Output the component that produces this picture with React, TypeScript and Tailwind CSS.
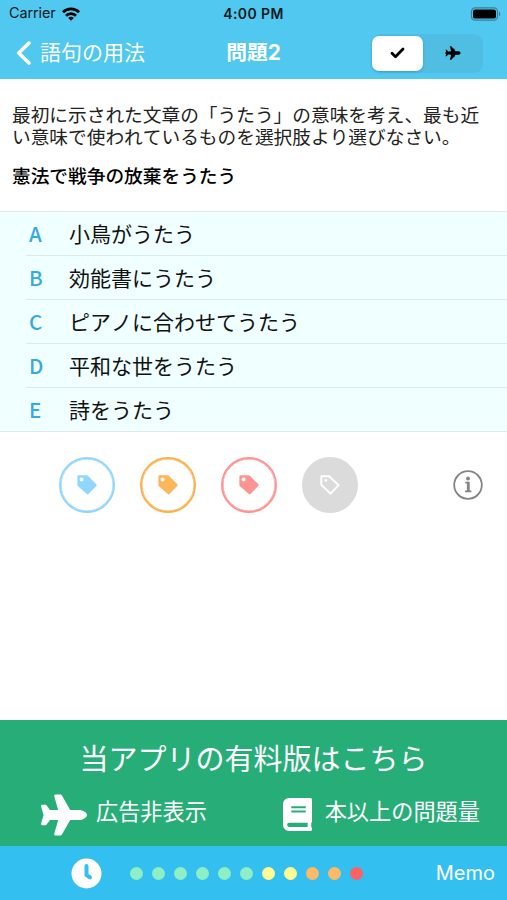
import type { ReactNode } from 'react'
import { FaBook, FaPlane } from 'react-icons/fa'

const choices = [
  { key: 'A', text: '小鳥がうたう' },
  { key: 'B', text: '効能書にうたう' },
  { key: 'C', text: 'ピアノに合わせてうたう' },
  { key: 'D', text: '平和な世をうたう' },
  { key: 'E', text: '詩をうたう' },
]

const dots = [
  'bg-[#8eeec5]',
  'bg-[#8eeec5]',
  'bg-[#8eeec5]',
  'bg-[#8eeec5]',
  'bg-[#8eeec5]',
  'bg-[#8eeec5]',
  'bg-[#fffd94]',
  'bg-[#fffd94]',
  'bg-[#fdb965]',
  'bg-[#fdb965]',
  'bg-[#fc6264]',
]

const TagIcon = () => (
  <svg width="20" height="20" viewBox="0 0 20 20" fill="currentColor">
    <path
      fillRule="evenodd"
      d="M1.5.3h8.3c.4 0 .8.2 1.1.5l8.4 8.5c.5.5.5 1.1 0 1.6l-7.9 8.2c-.5.5-1.1.5-1.6 0L1 11.2c-.4-.4-.6-.8-.6-1.3V1.4C.4.8.8.3 1.5.3ZM4.6 2.5a2 2 0 1 0 0 4 2 2 0 0 0 0-4Z"
    />
  </svg>
)

const TagOutlineIcon = () => (
  <svg width="20" height="20" viewBox="0 0 20 20" fill="none" stroke="currentColor" strokeWidth="1.9" strokeLinejoin="round">
    <path d="M1.3 1.2h7.8l9.5 9-8 8.5-9.3-9Z" />
    <circle cx="5.8" cy="5.4" r="1.4" fill="currentColor" stroke="none" />
  </svg>
)

const TagButton = ({ className, children }: { className: string; children: ReactNode }) => (
  <button className={`flex h-14 w-14 items-center justify-center rounded-full border-2 shadow-[inset_0_0_0_0.5px_currentColor] ${className}`}>
    {children}
  </button>
)

const StatusBar = () => (
  <div className="grid h-[27px] grid-cols-3 items-center px-[6px] text-[#10191d]">
    <div className="flex items-center gap-[6px] pl-[3px]">
      <span className="text-[14.4px] leading-none">Carrier</span>
      <svg width="18" height="14" viewBox="0 0 18 14" fill="none" stroke="#000" strokeWidth="2.8">
        <path d="M1 5.2a11.4 11.4 0 0 1 16 0M4 8.7a7 7 0 0 1 10 0" />
        <path d="M9 13.7 6.2 10.9a3.9 3.9 0 0 1 5.6 0Z" fill="#000" stroke="none" />
      </svg>
    </div>
    <span className="text-center text-[14px] font-semibold leading-none tracking-[0.4px]">4:00 PM</span>
    <svg className="justify-self-end" width="31" height="14" viewBox="0 0 31 14">
      <rect x="1.5" y=".8" width="26" height="12.4" rx="3.7" fill="none" stroke="#358095" strokeWidth="1.2" />
      <rect x="3" y="2.4" width="23" height="9.2" rx="2.2" fill="#000" />
      <path d="M29 4.8c1.8.7 1.8 3.7 0 4.4Z" fill="#358095" />
    </svg>
  </div>
)

const NavBar = () => (
  <div className="grid h-[52px] grid-cols-[1fr_auto_1fr] items-center px-4 text-white">
    <button className="flex items-center gap-[8px] text-[21px] leading-none">
      <svg width="16" height="25" viewBox="0 0 16 25" fill="none" stroke="currentColor" strokeWidth="3.5" strokeLinecap="round" strokeLinejoin="round">
        <path d="M13 2 2.7 12 13 22" />
      </svg>
      <span className="mb-[2px]">語句の用法</span>
    </button>
    <h1 className="text-[20.8px] font-bold leading-none">問題2</h1>
    <div className="mr-[8px] flex h-[39px] w-[111px] justify-self-end rounded-[9px] bg-[#50bee3] py-[2px] text-black">
      <button className="flex w-[51px] items-center justify-center rounded-[7px] bg-white shadow-[0_1px_3px_#00000030]">
        <svg width="15" height="12" viewBox="0 0 15 12" fill="none" stroke="currentColor" strokeWidth="2.8" strokeLinecap="round" strokeLinejoin="round">
          <path d="M2 6.2 5.5 9.7 13 2" />
        </svg>
      </button>
      <button className="flex flex-1 items-center justify-center">
        <svg width="16" height="14" viewBox="0 0 16 14" fill="currentColor">
          <path d="M4.9.2h1.5l2.1 2.5h.8c.5 0 .5.9 0 1h.1l1.1 1.6h3.3c1 .3 1.8.9 1.8 1.7s-.8 1.4-1.8 1.7h-3.3l-1.1 1.6h-.1c.5.1.5 1 0 1h-.8l-2.1 2.5H4.9l1.2-5.1-2.9-.3-1.5 1.8H.6l.6-2.4C.3 7.7.1 7.3.1 7s.2-.7 1.1-.8L.6 3.8h1.1l1.5 1.8 2.9-.3Z" />
        </svg>
      </button>
    </div>
  </div>
)

const PaidBanner = () => (
  <section className="flex h-[126px] flex-col bg-[#27ae78] pt-[21px] text-white">
    <p className="text-center text-[29px] leading-[38px]">当アプリの有料版はこちら</p>
    <div className="flex h-[67px] items-center pl-[41px] pr-[27px] text-[22.2px] leading-none">
      <FaPlane className="mt-[4px] h-[46px] w-[46px]" />
      <span className="ml-[9px]">広告非表示</span>
      <FaBook className="ml-auto mt-[4px] h-[33px] w-[29px]" preserveAspectRatio="none" />
      <span className="ml-[13px]">本以上の問題量</span>
    </div>
  </section>
)

const App = () => {
  return (
    <div className="flex h-[900px] w-full flex-col overflow-hidden whitespace-nowrap bg-white font-[Inter,'Noto_Sans_CJK_JP',sans-serif] [font-kerning:none]">
      <header className="h-[79px] shrink-0 bg-[#50c8f0]">
        <StatusBar />
        <NavBar />
      </header>
      <main className="flex-1">
        <section className="h-[132px] px-3 pt-[26px] text-[18.7px] leading-[21.5px] text-[#222]">
          <p>
            最初に示された文章の「うたう」の意味を考え、最も近
            <br />
            い意味で使われているものを選択肢より選びなさい。
          </p>
          <p className="mt-[18px] font-medium text-black">憲法で戦争の放棄をうたう</p>
        </section>
        <ul className="border-y border-[#e0e9e9] bg-[#f0ffff] font-['Noto_Sans_CJK_JP',sans-serif]">
          {choices.map((choice) => (
            <li key={choice.key} className="group flex h-11 pl-[26px] last:h-[43px]">
              <div className="flex flex-1 items-center border-b border-[#dde9e9] group-last:border-0">
                <span className="w-[43px] pl-[3px] text-[20.5px] font-medium leading-none text-[#36a9e1]">{choice.key}</span>
                <span className="text-[21px] leading-none text-[#111]">{choice.text}</span>
              </div>
            </li>
          ))}
        </ul>
        <div className="flex items-center gap-[25px] pl-[59px] pr-[24px] pt-[25px]">
          <TagButton className="border-[#90d7ff] text-[#90d7ff]">
            <TagIcon />
          </TagButton>
          <TagButton className="border-[#fdb14d] text-[#fdb65a]">
            <TagIcon />
          </TagButton>
          <TagButton className="border-[#ff9292] text-[#ff9292]">
            <TagIcon />
          </TagButton>
          <TagButton className="border-[#dbdbdb] bg-[#dbdbdb] text-white shadow-none">
            <TagOutlineIcon />
          </TagButton>
          <svg className="ml-auto text-[#858585]" width="30" height="30" viewBox="0 0 30 30" fill="none" stroke="currentColor">
            <circle cx="15" cy="15" r="13.8" strokeWidth="1.8" />
            <circle cx="15" cy="8.5" r="2" fill="currentColor" stroke="none" />
            <path d="M12.3 12.6h3.2M12 21.4h6.4" strokeWidth="1.8" />
            <path d="M15.3 11.8v9.5" strokeWidth="2.8" />
          </svg>
        </div>
      </main>
      <PaidBanner />
      <footer className="flex h-[54px] shrink-0 items-center bg-[#33bff0] pl-[71px] pr-[12px] text-white">
        <svg width="31" height="31" viewBox="0 0 31 31" fill="none">
          <circle cx="15.5" cy="15.5" r="15" fill="#fff" />
          <path d="M15.5 8v9l3.4 2.3" stroke="#33bff0" strokeWidth="4" strokeLinecap="round" strokeLinejoin="round" />
        </svg>
        <div className="ml-[28px] flex gap-[9px]">
          {dots.map((color, i) => (
            <span key={i} className={`h-[13px] w-[13px] rounded-full ${color}`} />
          ))}
        </div>
        <button className="mb-px ml-auto text-[20px] leading-none">Memo</button>
      </footer>
    </div>
  )
}

export default App
